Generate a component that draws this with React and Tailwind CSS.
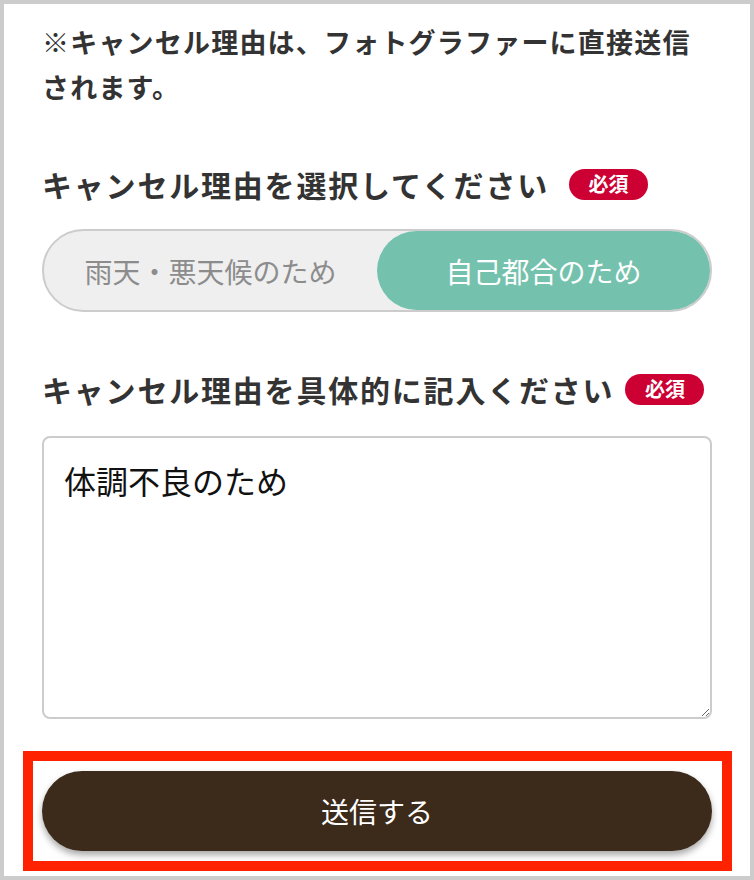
export default function App() {
  const font = { fontFamily: '"Noto Sans CJK JP", "Noto Sans", sans-serif' };

  return (
    <div
      className="w-[754px] min-h-[880px] border-4 border-[#cccccc] bg-white font-['Noto_Sans_CJK_JP',sans-serif]"
      style={font}
    >
      <div className="px-[38px] pt-[15px] pb-[5px]">
        {/* notice */}
        <p className="text-[27px] leading-[45px] font-bold tracking-[1.2px] text-[#333333]">
          ※キャンセル理由は、フォトグラファーに直接送信
          <br />
          されます。
        </p>

        {/* reason select */}
        <div className="mt-[55px] flex items-center h-[40px]">
          <span className="text-[30px] leading-[40px] font-bold tracking-[1.8px] text-[#333333] whitespace-nowrap">
            キャンセル理由を選択してください
          </span>
          <RequiredBadge className="ml-[20px]" />
        </div>

        <div className="mt-[25px] flex h-[83px] rounded-full border-2 border-[#cccccc] bg-[#efefef]">
          <div className="flex-1 flex items-center justify-center rounded-full text-[28px] text-[#8c8c8c]">
            雨天・悪天候のため
          </div>
          <div className="flex-1 flex items-center justify-center rounded-full bg-[#74c2ae] text-[28px] text-white">
            自己都合のため
          </div>
        </div>

        {/* reason detail */}
        <div className="mt-[57px] flex items-center h-[40px]">
          <span className="text-[30px] leading-[40px] font-bold tracking-[1.8px] text-[#333333] whitespace-nowrap">
            キャンセル理由を具体的に記入ください
          </span>
          <RequiredBadge className="ml-[11px]" />
        </div>

        <textarea
          className="mt-[27px] block w-full h-[283px] rounded-lg border-2 border-[#cccccc] px-[20px] pt-[18px] text-[32px] leading-[48px] text-[#111111] outline-none"
          defaultValue="体調不良のため"
        />

        {/* submit */}
        <div className="mt-[32px] -ml-[19px] -mr-[20px] border-[10px] border-[#ff2200] pl-[9px] pr-[10px] py-[10px]">
          <button className="w-full h-[80px] rounded-full bg-[#3c2a1a] text-[28px] text-white shadow-[0_4px_7px_rgba(0,0,0,0.35)]">
            送信する
          </button>
        </div>
      </div>
    </div>
  );
}

function RequiredBadge({ className = '' }) {
  return (
    <span
      className={`${className} inline-flex items-center justify-center w-[79px] h-[31px] rounded-full bg-[#cc0033] text-[20px] font-bold text-white`}
    >
      必須
    </span>
  );
}
